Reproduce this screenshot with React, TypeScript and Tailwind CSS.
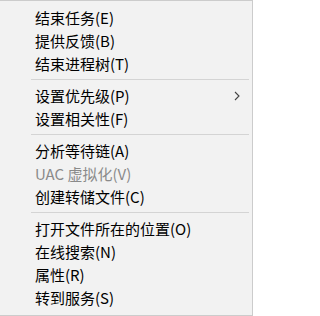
type Item = { label: string; disabled?: boolean; submenu?: boolean } | "sep";

const items: Item[] = [
  { label: "结束任务(E)" },
  { label: "提供反馈(B)" },
  { label: "结束进程树(T)" },
  "sep",
  { label: "设置优先级(P)", submenu: true },
  { label: "设置相关性(F)" },
  "sep",
  { label: "分析等待链(A)" },
  { label: "UAC 虚拟化(V)", disabled: true },
  { label: "创建转储文件(C)" },
  "sep",
  { label: "打开文件所在的位置(O)" },
  { label: "在线搜索(N)" },
  { label: "属性(R)" },
  { label: "转到服务(S)" },
];

const App = () => {
  return (
    <div className="w-[253px] h-[316px] bg-[#f2f2f2] border-r border-b border-t border-[#cccccc] flex flex-col pt-[5px]"
      style={{ fontFamily: '"Noto Sans CJK SC", "Noto Sans", sans-serif' }}>
      {items.map((item, i) =>
        item === "sep" ? (
          <div key={i} className="h-[9px] flex items-center pl-[31px] pr-[3px]">
            <div className="h-px w-full bg-[#d4d4d4]" />
          </div>
        ) : (
          <div key={i} className="h-[23px] flex items-center pl-[35px] pr-[12px] relative">
            <span className={`text-[15px] leading-none ${item.disabled ? "text-[#8a8a8a]" : "text-black"}`}>
              {item.label}
            </span>
            {item.submenu && (
              <svg className="absolute right-[12px] top-[7px]" width="6" height="10" viewBox="0 0 6 10">
                <path d="M1 1 L5 5 L1 9" fill="none" stroke="#444" strokeWidth="1.1" />
              </svg>
            )}
          </div>
        )
      )}
    </div>
  );
};

export default App;
